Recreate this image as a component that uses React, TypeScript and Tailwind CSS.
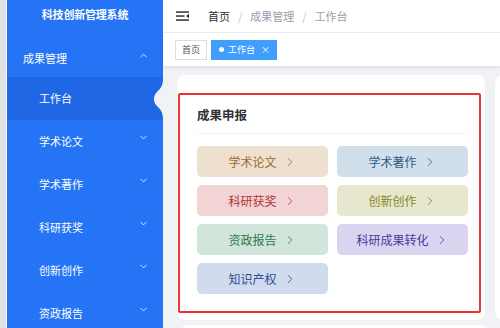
import { ChevronDown, ChevronUp, ChevronRight } from "lucide-react";

const menu = ["学术论文", "学术著作", "科研获奖", "创新创作", "资政报告"];

const entries = [
  { label: "学术论文", bg: "bg-[#eee0cf]", fg: "text-[#a3692c]" },
  { label: "学术著作", bg: "bg-[#d0dfea]", fg: "text-[#2d5b86]" },
  { label: "科研获奖", bg: "bg-[#f2d4d4]", fg: "text-[#b23535]" },
  { label: "创新创作", bg: "bg-[#e6e7cd]", fg: "text-[#86862c]" },
  { label: "资政报告", bg: "bg-[#d1e5da]", fg: "text-[#2f7a4e]" },
  { label: "科研成果转化", bg: "bg-[#dbd4f0]", fg: "text-[#4a3a9c]" },
  { label: "知识产权", bg: "bg-[#d0dbee]", fg: "text-[#2c4f96]" },
];

function FoldIcon() {
  return (
    <svg width="13" height="10" viewBox="0 0 13 10" className="text-[#303133]">
      <rect x="0" y="0.3" width="13" height="1.5" fill="currentColor" />
      <rect x="0" y="4.3" width="8.5" height="1.5" fill="currentColor" />
      <rect x="0" y="8.3" width="13" height="1.5" fill="currentColor" />
      <path d="M13 2.8 L10 5.05 L13 7.3 Z" fill="currentColor" />
    </svg>
  );
}

function Sidebar() {
  return (
    <aside className="w-[156px] shrink-0 bg-[#2474f5] text-white">
      <div className="h-[36px] pb-[8px] flex items-center justify-center text-[11px] font-bold tracking-[-0.2px]">
        科技创新管理系统
      </div>
      <div className="h-[41px] pt-[3px] pl-[16px] pr-[14px] flex items-center justify-between text-[11px]">
        <span>成果管理</span>
        <ChevronUp size={11} strokeWidth={1.8} className="-mt-[6px]" />
      </div>
      <div className="relative h-[43px] bg-[#2067e6] pl-[32px] flex items-center text-[11px]">
        <span>工作台</span>
        <svg
          width="9"
          height="40"
          viewBox="0 0 9 40"
          className="absolute right-0 top-[2px]"
        >
          <path
            d="M9 0 C9 7 6 10 3 13 C1 15 0 17 0 20 C0 23 1 25 3 27 C6 30 9 33 9 40 Z"
            fill="#f0f2f5"
          />
        </svg>
      </div>
      {menu.map((m) => (
        <div
          key={m}
          className="h-[43px] pl-[32px] pr-[14px] flex items-center justify-between text-[11px]"
        >
          <span>{m}</span>
          <ChevronDown size={11} strokeWidth={1.8} className="-mt-[8px]" />
        </div>
      ))}
    </aside>
  );
}

function TopBar() {
  return (
    <>
      <div className="h-[33px] shrink-0 bg-white border-b border-[#eceef2] flex items-center pl-[13px]">
        <FoldIcon />
        <div className="ml-[19px] flex items-center text-[11px] text-[#97a0ad]">
          <span className="text-[#303133]">首页</span>
          <span className="mx-[8px] text-[#c0c4cc]">/</span>
          <span>成果管理</span>
          <span className="mx-[8px] text-[#c0c4cc]">/</span>
          <span>工作台</span>
        </div>
      </div>
      <div className="h-[34px] shrink-0 bg-white border-b border-[#e4e7ed] shadow-[0_1px_3px_rgba(0,0,0,0.08)] flex items-center pl-[12px] gap-[4px]">
        <div className="h-[20px] w-[32px] border border-[#d8dce5] flex items-center justify-center text-[9px] text-[#495060]">
          首页
        </div>
        <div className="h-[20px] w-[66px] bg-[#409eff] flex items-center pl-[8px] text-[9px] text-white">
          <span className="w-[5px] h-[5px] rounded-full bg-white mr-[4px]" />
          <span>工作台</span>
          <span className="ml-[6px] text-[9px]">×</span>
        </div>
      </div>
    </>
  );
}

function ResultCard() {
  return (
    <div className="w-[308px] h-[245px] shrink-0 bg-white rounded-[8px] pt-[18px] pl-[1px] pr-[4px]">
      <div className="border-2 border-[#ee3333] rounded-[2px] h-[220px] pt-[11px] pl-[17px] pr-[12px]">
        <div className="text-[12.5px] font-bold text-[#303133] leading-[18px]">成果申报</div>
        <div className="mt-[9px] h-px bg-[#f0f1f3]" />
        <div className="mt-[12px] grid grid-cols-[131px_131px] gap-x-[9px] gap-y-[8px]">
          {entries.map((e) => (
            <div
              key={e.label}
              className={`h-[31px] rounded-[5px] flex items-center justify-center text-[12px] ${e.bg} ${e.fg}`}
            >
              <span>{e.label}</span>
              <ChevronRight size={14} strokeWidth={1.4} className="ml-[6px]" />
            </div>
          ))}
        </div>
      </div>
    </div>
  );
}

export default function App() {
  return (
    <div className="flex w-[500px] h-[328px] overflow-hidden font-['Noto_Sans_CJK_SC',sans-serif]">
      <div className="w-[7px] shrink-0 bg-[#e2e2e2] border-r border-[#f6f6f6]" />
      <Sidebar />
      <div className="flex-1 min-w-0 flex flex-col bg-[#f0f2f5]">
        <TopBar />
        <div className="flex-1 overflow-hidden pt-[8px] pl-[14px]">
          <div className="flex gap-[10px]">
            <ResultCard />
            <div className="w-[200px] h-[245px] shrink-0 bg-white rounded-[8px]" />
          </div>
          <div className="mt-[5px] w-[308px] h-[60px] bg-white rounded-[8px] ml-[3px]" />
        </div>
      </div>
    </div>
  );
}
